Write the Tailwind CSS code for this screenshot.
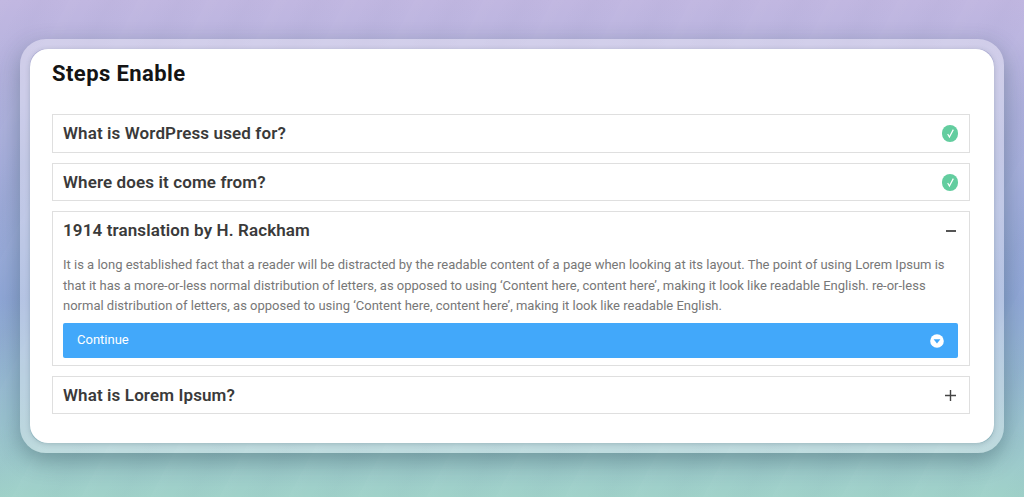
<!DOCTYPE html>
<html lang="en">
<head>
    <meta charset="UTF-8">
    <title>Steps Enable</title>
    <script src="https://cdn.jsdelivr.net/npm/@tailwindcss/browser@4"></script>
</head>
<body class="relative h-[497px] overflow-hidden bg-gradient-to-b from-[#c1b7e1] via-[#8fa6d6] via-60% to-[#a0d2c9] font-['Roboto',sans-serif]">
    <!-- faint diagonal streaks of the backdrop -->
    <div class="absolute inset-0 bg-[repeating-linear-gradient(118deg,rgba(255,255,255,0.02)_0px,rgba(255,255,255,0)_17px,rgba(60,70,120,0.02)_37px,rgba(255,255,255,0)_61px)]"></div>
    <div class="relative pt-[39px] px-5">
        <div class="h-[414px] rounded-[26px] border-[10px] border-white/35 bg-clip-padding shadow-[0_8px_22px_rgba(40,70,80,0.38)]">
            <div class="h-[394px] rounded-[18px] bg-white pl-[22px] pr-[24px] pt-[11px] shadow-[0_1px_5px_rgba(50,80,90,0.25)]">
                <h2 class="h-[54px] text-[22px] leading-[28px] font-bold tracking-[0.42px] text-[#141414]">Steps Enable</h2>

                <div class="flex flex-col gap-[10px]">
                    <div class="flex h-[39px] items-center justify-between border border-[#dfdfdf] pl-[10px] pr-[11px]">
                        <span class="text-[17px] font-semibold tracking-[0.12px] text-[#3a3a3a]">What is WordPress used for?</span>
                        <span class="flex h-[17px] w-4 items-center justify-center rounded-full bg-[#63cd9f]">
                            <svg class="h-[13px] w-[13px]" viewBox="0 0 12 12" fill="none" stroke="#fff" stroke-width="1.1"><path d="M3.4 6.4 5 9.2 8.6 2.4"/></svg>
                        </span>
                    </div>
                    <div class="flex h-[38px] items-center justify-between border border-[#dfdfdf] pl-[10px] pr-[11px] pt-[1px]">
                        <span class="text-[17px] font-semibold tracking-[0.12px] text-[#3a3a3a]">Where does it come from?</span>
                        <span class="flex h-[17px] w-4 items-center justify-center rounded-full bg-[#63cd9f]">
                            <svg class="h-[13px] w-[13px]" viewBox="0 0 12 12" fill="none" stroke="#fff" stroke-width="1.1"><path d="M3.4 6.4 5 9.2 8.6 2.4"/></svg>
                        </span>
                    </div>
                    <div class="h-[155px] border border-[#dfdfdf] pl-[10px] pr-[11px]">
                        <div class="flex h-[37px] items-center justify-between">
                            <span class="text-[17px] font-semibold tracking-[0.12px] text-[#3a3a3a]">1914 translation by H. Rackham</span>
                            <span class="mr-[2px] h-[2px] w-[10px] bg-[#555]"></span>
                        </div>
                        <p class="mt-[6px] text-[13px] leading-[20.5px] text-[#777]">It is a long established fact that a reader will be distracted by the readable content of a page when looking at its layout. The point of using Lorem Ipsum is that it has a more-or-less normal distribution of letters, as opposed to using ‘Content here, content here’, making it look like readable English. re-or-less normal distribution of letters, as opposed to using ‘Content here, content here’, making it look like readable English.</p>
                        <div class="mt-[6px] flex h-[35px] items-center justify-between rounded-[2px] bg-[#42a8fa] pl-[14px] pr-[14px]">
                            <span class="text-[13px] text-white">Continue</span>
                            <svg class="mt-[2px] h-[14px] w-[14px]" viewBox="0 0 14 14"><circle cx="7" cy="7" r="6.8" fill="#fff"/><path d="M3.6 5.2h6.8L7 9.4z" fill="#42a8fa"/></svg>
                        </div>
                    </div>
                    <div class="flex h-[38px] items-center justify-between border border-[#dfdfdf] pl-[10px] pr-[11px] pt-[1px]">
                        <span class="text-[17px] font-semibold tracking-[0.12px] text-[#3a3a3a]">What is Lorem Ipsum?</span>
                        <svg class="mr-[2px] h-[11px] w-[11px]" viewBox="0 0 11 11" stroke="#444" stroke-width="1.4"><path d="M0 5.5h11M5.5 0v11"/></svg>
                    </div>
                </div>
            </div>
        </div>
    </div>
</body>
</html>
